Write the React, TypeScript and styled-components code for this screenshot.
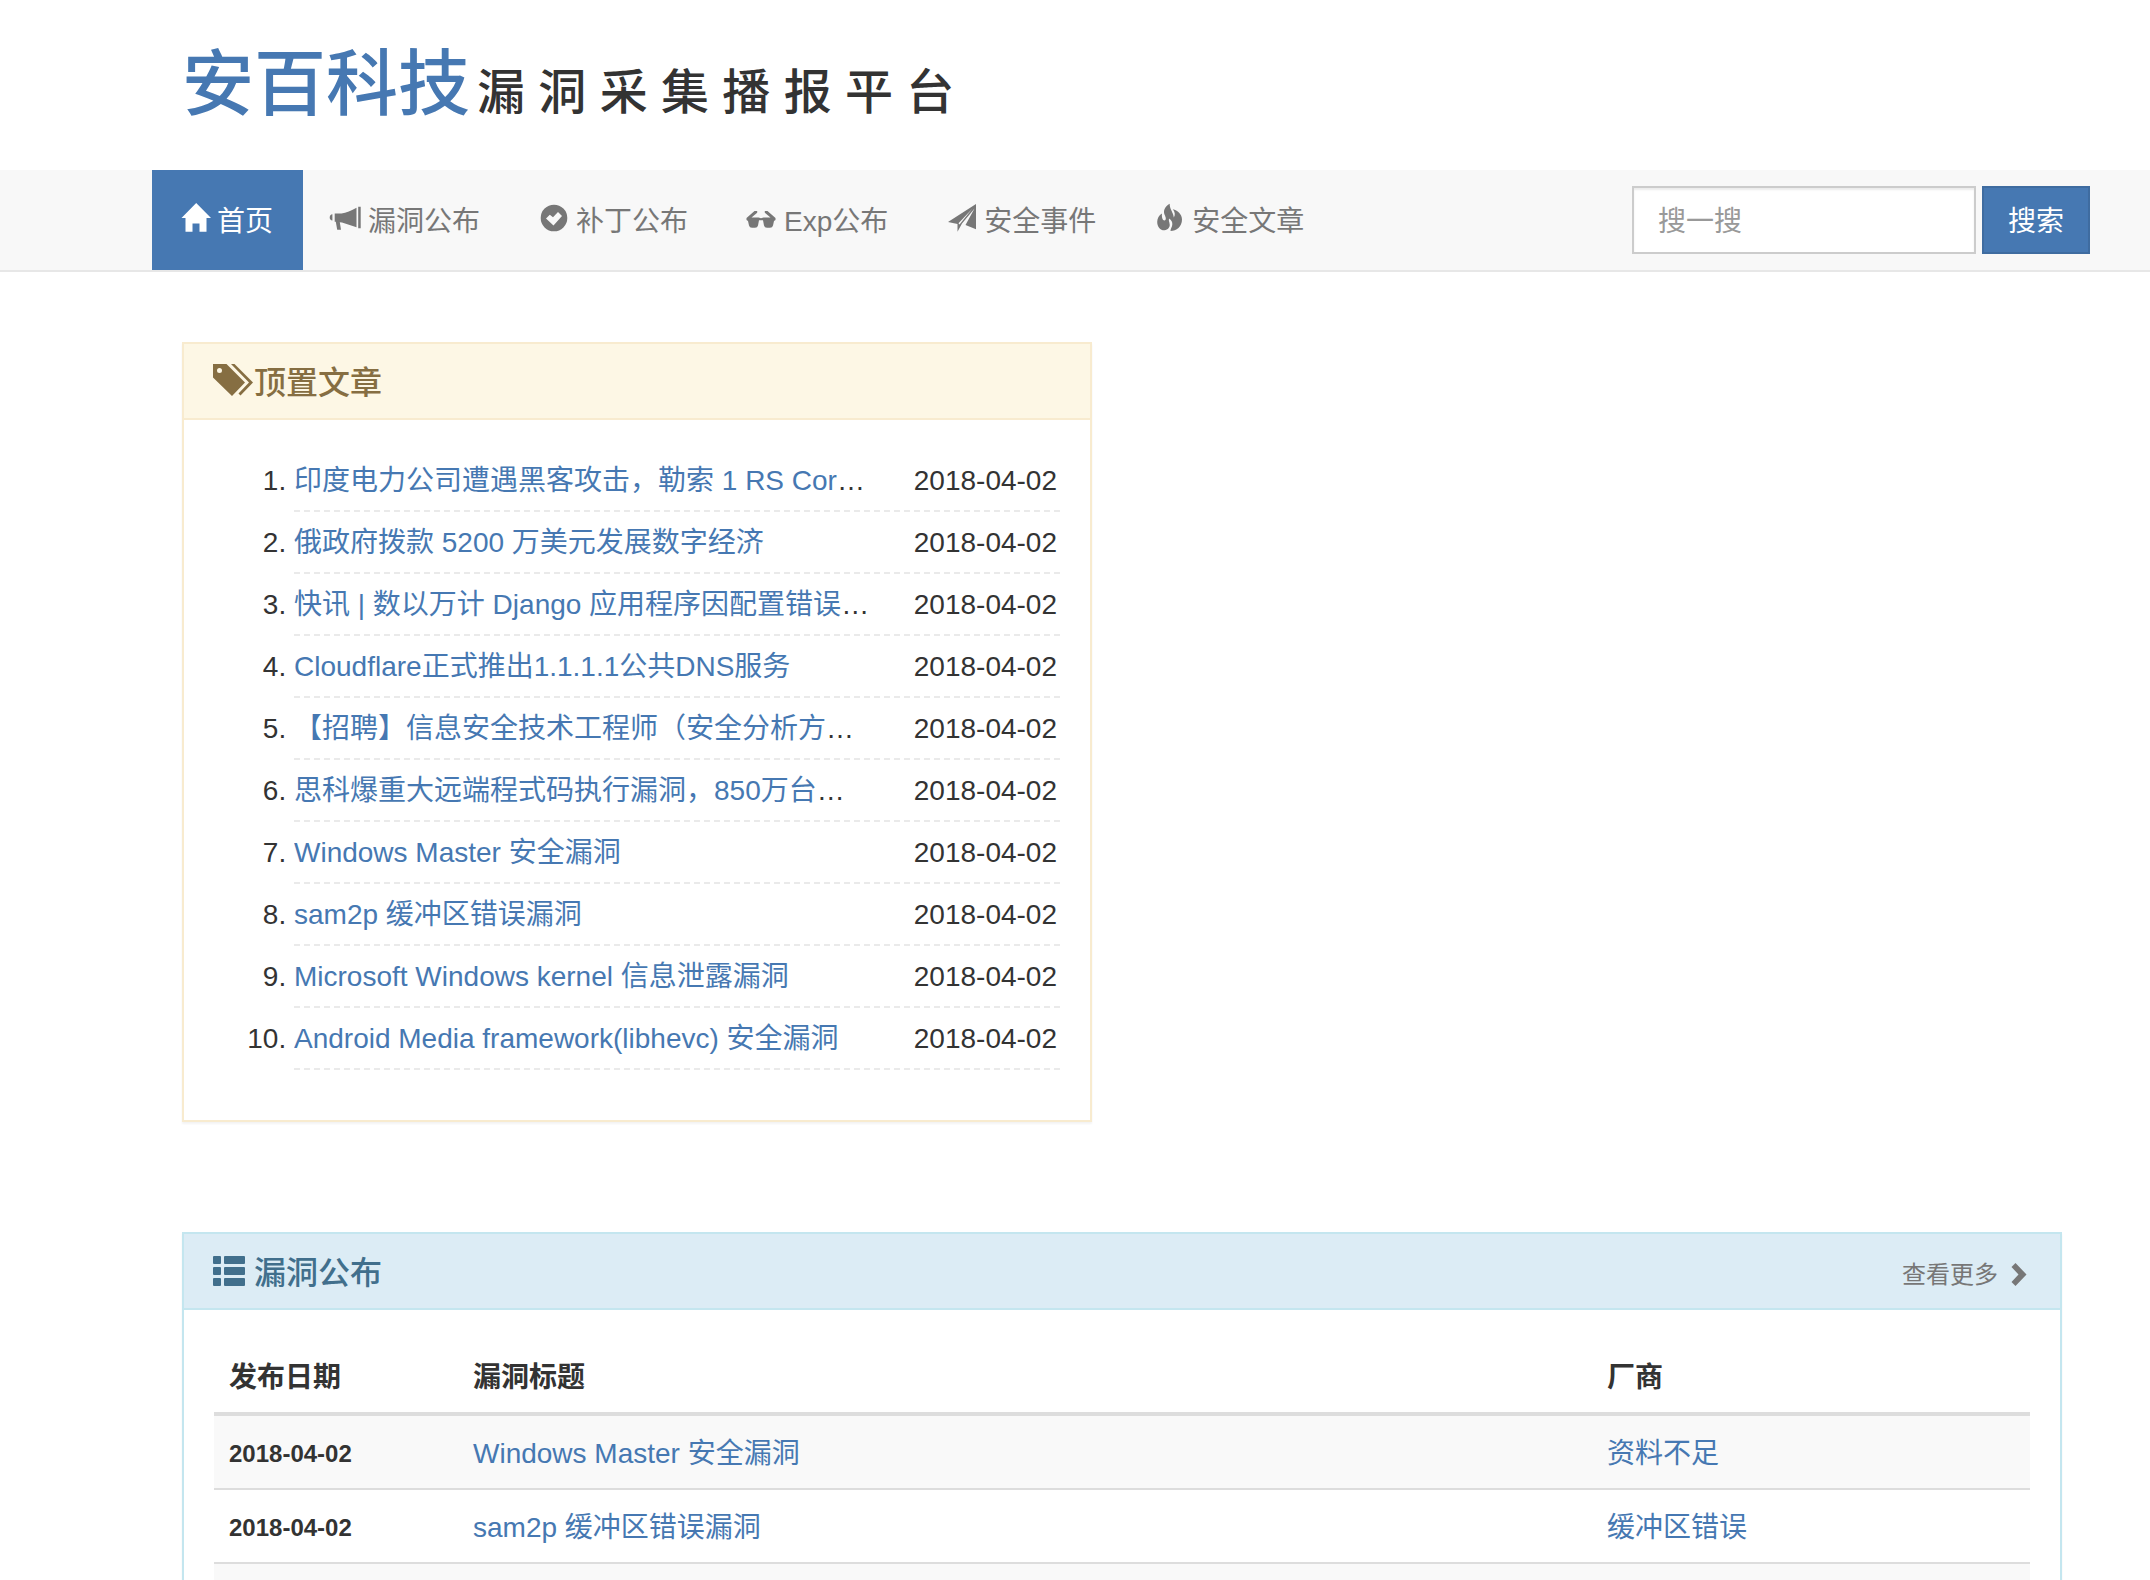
import React from "react";
import styled, { createGlobalStyle } from "styled-components";

const blue = "#4678b2";

const GlobalStyle = createGlobalStyle`
  *, *::before, *::after { box-sizing: border-box; }
  body {
    margin: 0;
    background: #fff;
    color: #333;
    font-family: "Liberation Sans", "Noto Sans CJK SC", sans-serif;
    font-size: 28px;
    line-height: 40px;
  }
`;

const Page = styled.div`
  height: 100vh;
  overflow: hidden;
`;

const Container = styled.div`
  margin: 0 58px 0 152px;
`;

const Header = styled.header`
  display: flex;
  align-items: flex-end;
  height: 170px;
  padding: 0 30px 41px;
`;

const SiteTitle = styled.h1`
  display: flex;
  align-items: baseline;
  gap: 7px;
  margin: 0;
  font-size: 48px;
  font-weight: 500;
  line-height: 72px;
`;

const Brand = styled.a`
  color: ${blue};
  font-size: 72px;
  text-decoration: none;
`;

const NavBar = styled.nav`
  background: #f8f8f8;
  border-bottom: 2px solid #e7e7e7;
`;

const NavRow = styled(Container)`
  display: flex;
  align-items: center;
  justify-content: space-between;
`;

const NavList = styled.ul`
  display: flex;
  margin: 0;
  padding: 0;
  list-style: none;
`;

const NavLink = styled.a<{ $active?: boolean }>`
  display: flex;
  align-items: center;
  gap: 7px;
  height: 100px;
  padding: 0 30px;
  background: ${(p) => (p.$active ? blue : "transparent")};
  color: ${(p) => (p.$active ? "#fff" : "#777")};
  text-decoration: none;
`;

const NavItem = styled.li`
  & + & { padding-right: 1px; }
`;

const NavLabel = styled.span`
  padding-top: 3px;
`;

const SearchForm = styled.form`
  display: flex;
  gap: 6px;
  padding-right: 2px;
`;

const SearchInput = styled.input`
  width: 344px;
  height: 68px;
  padding: 3px 24px 0;
  border: 2px solid #ccc;
  border-radius: 0;
  background: #fff;
  box-shadow: inset 0 2px 2px rgba(0, 0, 0, 0.075);
  color: #555;
  font: inherit;
  &::placeholder { color: #999; opacity: 1; }
`;

const SearchButton = styled.button`
  height: 68px;
  padding: 3px 24px 0;
  border: 2px solid #3f6ca0;
  border-radius: 0;
  background: ${blue};
  color: #fff;
  font: inherit;
`;

const Main = styled(Container)`
  display: flex;
  flex-direction: column;
  align-items: flex-start;
  gap: 110px;
  padding: 70px 30px 0;
`;

const tones = {
  warning: { bg: "#fdf7e5", border: "#f8ebcf", text: "#866e42" },
  info: { bg: "#dcecf5", border: "#c4e6ef", text: "#416f8c" },
};

const Panel = styled.section<{ $tone: keyof typeof tones; $width: string }>`
  width: ${(p) => p.$width};
  border: 2px solid ${(p) => tones[p.$tone].border};
  box-shadow: 0 2px 2px rgba(0, 0, 0, 0.05);
`;

const PanelHeading = styled.div<{ $tone: keyof typeof tones }>`
  display: flex;
  align-items: center;
  justify-content: space-between;
  height: 76px;
  padding: 0 30px;
  border-bottom: 2px solid ${(p) => tones[p.$tone].border};
  background: ${(p) => tones[p.$tone].bg};
  color: ${(p) => tones[p.$tone].text};
`;

const PanelTitle = styled.h3<{ $gap: number }>`
  display: flex;
  align-items: center;
  gap: ${(p) => p.$gap}px;
  margin: 0;
  font-size: 32px;
  font-weight: 500;
`;

const TitleText = styled.span`
  padding-top: 4px;
`;

const MoreLink = styled.a`
  display: flex;
  align-items: center;
  gap: 8px;
  padding-top: 8px;
  color: #777;
  font-size: 24px;
  text-decoration: none;
`;

const PanelBody = styled.div`
  padding: 30px;
`;

const ArticleList = styled.ol`
  margin: 0 0 20px;
  padding: 0 0 0 80px;
  line-height: 62px;
`;

const Article = styled.li`
  border-bottom: 2px dashed #eaeaea;
`;

const ArticleRow = styled.div`
  display: flex;
  height: 60px;
`;

const ArticleTitle = styled.span`
  flex: 1;
  min-width: 0;
  overflow: hidden;
  text-overflow: ellipsis;
  white-space: nowrap;
`;

const ArticleDate = styled.time`
  flex: 0 0 190px;
  padding-right: 3px;
  text-align: right;
`;

const TextLink = styled.a`
  color: ${blue};
  text-decoration: none;
`;

const Table = styled.table`
  width: 100%;
  table-layout: fixed;
  border-collapse: separate;
  border-spacing: 0;
`;

const HeadCell = styled.th<{ $width?: number }>`
  width: ${(p) => (p.$width ? `${p.$width}px` : "auto")};
  height: 76px;
  padding: 18px 15px 14px;
  border-bottom: 4px solid #ddd;
  text-align: left;
  font-weight: 700;
`;

const BodyRow = styled.tr`
  &:nth-child(odd) { background: #f9f9f9; }
`;

const Cell = styled.td`
  height: 74px;
  padding: 18px 15px 14px;
  border-bottom: 2px solid #ddd;
`;

const DateCell = styled(Cell)`
  font-size: 24px;
  font-weight: 700;
`;

const Glyph = styled.svg`
  flex: none;
  display: block;
  fill: currentColor;
  overflow: visible;
`;

const HomeIcon = () => (
  <Glyph width="28" height="28" viewBox="0 0 28 28" aria-hidden="true">
    <path d="M14.2-3 29 12H24.500V25.700H17.500V17.500H10.500V25.700H3.500V12H-.5L14.200-3Z" />
  </Glyph>
);

const BullhornIcon = () => (
  <Glyph width="28" height="28" viewBox="0 0 28 28" aria-hidden="true">
    <path d="M25.200.8h2.500v21.500h-2.500zM23.500 1.700V21.300L9 16.500l-2.200-.2L8 23.700H4.200L2.800 15.700H1.700V7.400H8.500C13 6.800 18.500 4.500 23.500 1.700ZM-.6 8.300v6.200C-2.300 14.300-3.300 13-3.300 11.400S-2.300 8.500-.6 8.300Z" />
  </Glyph>
);

const CheckIcon = () => (
  <Glyph width="28" height="28" viewBox="0 0 28 28" aria-hidden="true">
    <path fillRule="evenodd" d="M13-1.300a13.300 13.300 0 1 1 0 26.600 13.300 13.300 0 0 1 0-26.600ZM17 6 12 11.200 8.800 8.800 5 12.500l7.500 7L21 10 17 6Z" />
  </Glyph>
);

const SunglassesIcon = () => (
  <Glyph width="28" height="28" viewBox="0 0 28 28" aria-hidden="true">
    <path d="M8.200 5v1.800L2.500 11.500H9.500L12 12.300l2.500-.8H21.500L15.800 6.800V5H18.500L26.500 12V14L25 15 24 19.500Q23.500 21.700 21 21.700H18Q15.500 21.700 15 19.500L14 14.200H10L9 19.500Q8.500 21.700 6 21.700H3Q.5 21.700 0 19.500L-1 15-2.500 14V12L5.500 5Z" />
  </Glyph>
);

const PlaneIcon = () => (
  <Glyph width="28" height="28" viewBox="0 0 28 28" aria-hidden="true">
    <path d="M27-2V23.300L16.500 19 25.500 2.500 13 17.500 8.500 25.700V18L-1 16 27-2ZM23.500 2.500 9.500 17.200 10.500 18.500Z" />
  </Glyph>
);

const FireIcon = () => (
  <Glyph width="28" height="28" viewBox="0 0 28 28" aria-hidden="true">
    <path d="M12.700-2.300C8 .5 6 4.500 7.500 8.500 9 11.500 9.500 14 7.500 14.500 5.500 14.500 4.500 11 5 7.500 2 9 .2 12.500.2 16 .2 21 3.500 24.500 7.500 24.300 11 24 13 21 12.700 18.500 12.500 16 11.500 15 12 12.500 14.500 14 15.500 16 15.300 18.500 15.200 21 13.500 22.500 13.500 25 19.500 25 25 20.500 25 13.500 25 8 20.500 4.500 15.800 3.300 18 6 18.500 9 16.800 11.500 16.500 6.500 12.500 3 12.700-2.300Z" />
  </Glyph>
);

const TagsIcon = () => (
  <Glyph width="40" height="32" viewBox="0 0 40 32" aria-hidden="true">
    <path fillRule="evenodd" d="M-1-1H12.500L31 17.500 18 31-1 12.500V-1ZM5.500 3a2.500 2.500 0 1 0 0 5 2.500 2.500 0 0 0 0-5Z" />
    <path d="M17-1H20.500L39 17.500 26.500 30.500 24.500 28.500 35 17.500 17-1Z" />
  </Glyph>
);

const ListIcon = () => (
  <Glyph width="32" height="32" viewBox="0 0 32 32" aria-hidden="true">
    {[1, 12, 23].map((y) => (
      <g key={y}>
        <rect x="-1" y={y} width="8" height="8" rx="1" />
        <rect x="10" y={y} width="21" height="8" rx="1" />
      </g>
    ))}
  </Glyph>
);

const ChevronIcon = () => (
  <Glyph width="24" height="24" viewBox="0 0 24 24" aria-hidden="true">
    <path d="M9.500 0 20.500 11.500 9.500 23 5.500 19 12.500 11.500 5.500 4Z" />
  </Glyph>
);

const navItems = [
  { label: "首页", Icon: HomeIcon, active: true },
  { label: "漏洞公布", Icon: BullhornIcon },
  { label: "补丁公布", Icon: CheckIcon },
  { label: "Exp公布", Icon: SunglassesIcon },
  { label: "安全事件", Icon: PlaneIcon },
  { label: "安全文章", Icon: FireIcon },
];

const articles = [
  "印度电力公司遭遇黑客攻击，勒索 1 RS Core 比特币",
  "俄政府拨款 5200 万美元发展数字经济",
  "快讯 | 数以万计 Django 应用程序因配置错误泄露",
  "Cloudflare正式推出1.1.1.1公共DNS服务",
  "【招聘】信息安全技术工程师（安全分析方向）",
  "思科爆重大远端程式码执行漏洞，850万台设备",
  "Windows Master 安全漏洞",
  "sam2p 缓冲区错误漏洞",
  "Microsoft Windows kernel 信息泄露漏洞",
  "Android Media framework(libhevc) 安全漏洞",
];

const bugs = [
  { date: "2018-04-02", title: "Windows Master 安全漏洞", vendor: "资料不足" },
  { date: "2018-04-02", title: "sam2p 缓冲区错误漏洞", vendor: "缓冲区错误" },
  { date: "", title: "", vendor: "" },
];

export default function App() {
  return (
    <Page>
      <GlobalStyle />
      <Container>
        <Header>
          <SiteTitle>
            <Brand href="#">安百科技</Brand>
            <span>漏 洞 采 集 播 报 平 台</span>
          </SiteTitle>
        </Header>
      </Container>
      <NavBar>
        <NavRow>
          <NavList>
            {navItems.map(({ label, Icon, active }) => (
              <NavItem key={label}>
                <NavLink href="#" $active={active}>
                  <Icon />
                  <NavLabel>{label}</NavLabel>
                </NavLink>
              </NavItem>
            ))}
          </NavList>
          <SearchForm onSubmit={(e) => e.preventDefault()}>
            <SearchInput type="text" placeholder="搜一搜" aria-label="搜一搜" />
            <SearchButton type="submit">搜索</SearchButton>
          </SearchForm>
        </NavRow>
      </NavBar>
      <Main as="main">
        <Panel $tone="warning" $width="calc(50% - 30px)">
          <PanelHeading $tone="warning">
            <PanelTitle $gap={0}>
              <TagsIcon />
              <TitleText>顶置文章</TitleText>
            </PanelTitle>
          </PanelHeading>
          <PanelBody>
            <ArticleList>
              {articles.map((title) => (
                <Article key={title}>
                  <ArticleRow>
                    <ArticleTitle>
                      <TextLink href="#">{title}</TextLink>
                    </ArticleTitle>
                    <ArticleDate>2018-04-02</ArticleDate>
                  </ArticleRow>
                </Article>
              ))}
            </ArticleList>
          </PanelBody>
        </Panel>
        <Panel $tone="info" $width="100%">
          <PanelHeading $tone="info">
            <PanelTitle $gap={8}>
              <ListIcon />
              <TitleText>漏洞公布</TitleText>
            </PanelTitle>
            <MoreLink href="#">
              <span>查看更多</span>
              <ChevronIcon />
            </MoreLink>
          </PanelHeading>
          <PanelBody>
            <Table>
              <thead>
                <tr>
                  <HeadCell scope="col" $width={244}>发布日期</HeadCell>
                  <HeadCell scope="col">漏洞标题</HeadCell>
                  <HeadCell scope="col" $width={438}>厂商</HeadCell>
                </tr>
              </thead>
              <tbody>
                {bugs.map((bug, i) => (
                  <BodyRow key={i}>
                    <DateCell>{bug.date}</DateCell>
                    <Cell>{bug.title && <TextLink href="#">{bug.title}</TextLink>}</Cell>
                    <Cell>{bug.vendor && <TextLink href="#">{bug.vendor}</TextLink>}</Cell>
                  </BodyRow>
                ))}
              </tbody>
            </Table>
          </PanelBody>
        </Panel>
      </Main>
    </Page>
  );
}
